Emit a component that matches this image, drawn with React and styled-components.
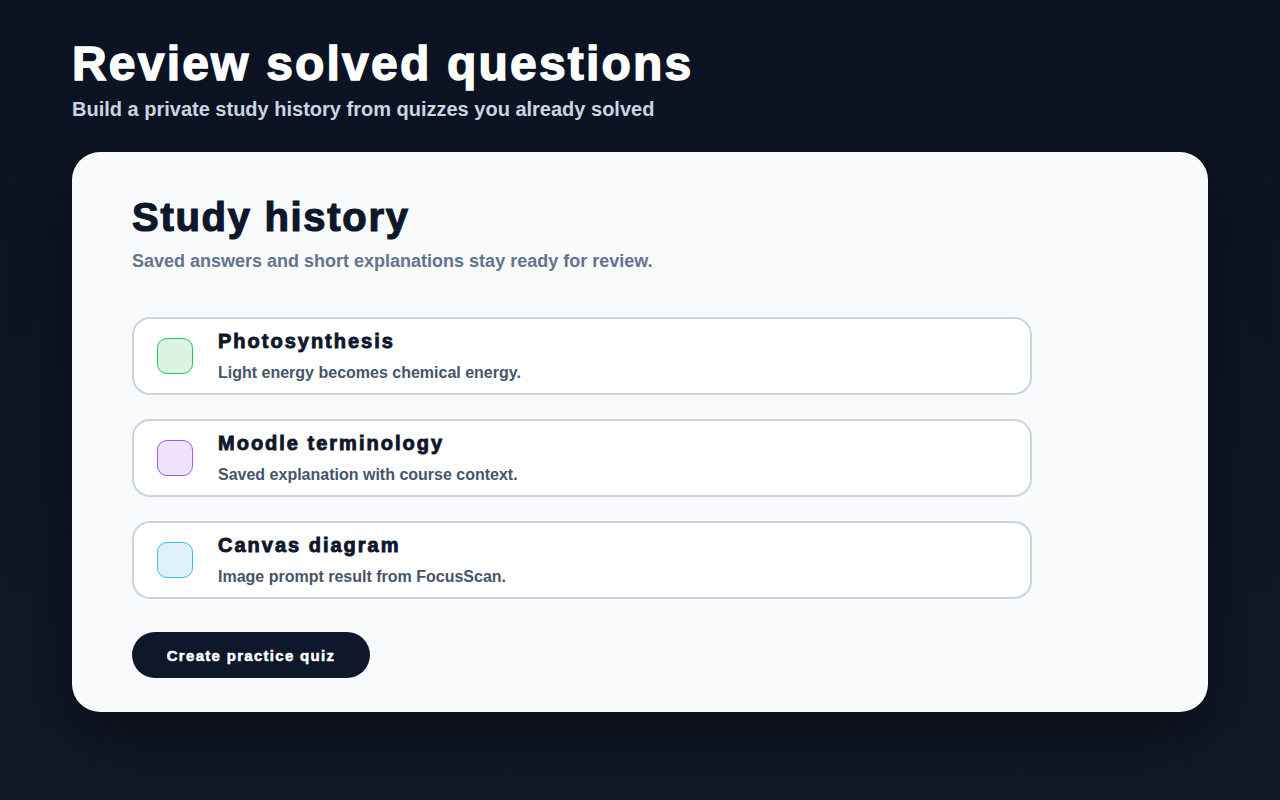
import React from "react";
import styled, { createGlobalStyle } from "styled-components";

const Global = createGlobalStyle`
  html, body { margin: 0; padding: 0; }
  body {
    min-height: 100vh;
    background: linear-gradient(180deg, #0b1222 0%, #111827 100%);
    font-family: "Liberation Sans", Arial, sans-serif;
  }
`;

const Page = styled.main`
  min-height: 800px;
  box-sizing: border-box;
  padding: 38px 72px 40px;
  display: flex;
  flex-direction: column;
`;

const Heading = styled.h1`
  margin: 0;
  font-size: 48px;
  line-height: 1.1;
  font-weight: 700;
  color: #ffffff;
  letter-spacing: 2.2px;
  -webkit-text-stroke: 1.4px #ffffff;
`;

const Lead = styled.p`
  margin: 6px 0 0;
  font-size: 20px;
  line-height: 1.2;
  font-weight: 700;
  color: #cbd5e1;
`;

const Card = styled.section`
  margin-top: 31px;
  background: #f8fafc;
  border-radius: 28px;
  padding: 43px 60px 34px;
  box-shadow: 0 24px 60px rgba(0, 0, 0, 0.45);
  display: flex;
  flex-direction: column;
  align-items: flex-start;
`;

const CardTitle = styled.h2`
  margin: 0;
  font-size: 40px;
  line-height: 1.1;
  font-weight: 700;
  color: #0f172a;
  letter-spacing: 1.7px;
  -webkit-text-stroke: 1.2px #0f172a;
`;

const CardLead = styled.p`
  margin: 12px 0 0;
  font-size: 18px;
  line-height: 1.2;
  font-weight: 700;
  color: #64748b;
`;

const List = styled.ul`
  list-style: none;
  margin: 45px 0 0;
  padding: 0;
  display: flex;
  flex-direction: column;
  gap: 24px;
  width: 900px;
`;

const Item = styled.li`
  box-sizing: border-box;
  height: 78px;
  border: 2px solid #cbd5e1;
  border-radius: 18px;
  background: #ffffff;
  display: flex;
  align-items: center;
  padding: 0 23px;
  gap: 25px;
`;

const Swatch = styled.span`
  flex: none;
  box-sizing: border-box;
  width: 36px;
  height: 36px;
  border-radius: 10px;
  border: 1px solid ${(p) => p.$border};
  background: ${(p) => p.$fill};
`;

const ItemText = styled.div`
  display: flex;
  flex-direction: column;
  gap: 12px;
`;

const ItemTitle = styled.h3`
  margin: 0;
  font-size: 20px;
  line-height: 1.1;
  font-weight: 700;
  letter-spacing: 2px;
  color: #0f172a;
  -webkit-text-stroke: 0.9px #0f172a;
`;

const ItemDesc = styled.p`
  margin: 0;
  font-size: 16px;
  line-height: 1.15;
  font-weight: 700;
  color: #475569;
`;

const Button = styled.button`
  margin-top: 33px;
  width: 238px;
  height: 46px;
  border: none;
  border-radius: 23px;
  background: #0f172a;
  color: #ffffff;
  font-family: "Liberation Sans", Arial, sans-serif;
  font-size: 15px;
  font-weight: 700;
  letter-spacing: 1.3px;
  -webkit-text-stroke: 0.5px #ffffff;
  cursor: pointer;
`;

const items = [
  { title: "Photosynthesis", desc: "Light energy becomes chemical energy.", border: "#22c55e", fill: "#dcf3e4" },
  { title: "Moodle terminology", desc: "Saved explanation with course context.", border: "#a855f7", fill: "#efe4fc" },
  { title: "Canvas diagram", desc: "Image prompt result from FocusScan.", border: "#38bdf8", fill: "#dff2fc" },
];

export default function App() {
  return (
    <>
      <Global />
      <Page>
        <Heading>Review solved questions</Heading>
        <Lead>Build a private study history from quizzes you already solved</Lead>
        <Card>
          <CardTitle>Study history</CardTitle>
          <CardLead>Saved answers and short explanations stay ready for review.</CardLead>
          <List>
            {items.map((it) => (
              <Item key={it.title}>
                <Swatch $border={it.border} $fill={it.fill} />
                <ItemText>
                  <ItemTitle>{it.title}</ItemTitle>
                  <ItemDesc>{it.desc}</ItemDesc>
                </ItemText>
              </Item>
            ))}
          </List>
          <Button>Create practice quiz</Button>
        </Card>
      </Page>
    </>
  );
}
